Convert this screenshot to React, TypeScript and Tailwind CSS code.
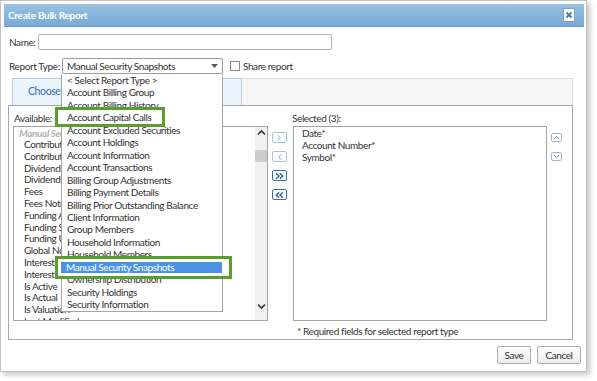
import React from "react";

const font = { fontFamily: "Lato, 'Open Sans', sans-serif" };

const availableItems = [
  "Contribution Amount",
  "Contribution Date",
  "Dividends Amount",
  "Dividends Date",
  "Fees",
  "Fees Notes",
  "Funding Amount",
  "Funding Source",
  "Funding Unit",
  "Global Notes",
  "Interest Amount",
  "Interest Date",
  "Is Active",
  "Is Actual",
  "Is Valuation",
  "Last Modified",
];

const reportTypes = [
  "< Select Report Type >",
  "Account Billing Group",
  "Account Billing History",
  "Account Capital Calls",
  "Account Excluded Securities",
  "Account Holdings",
  "Account Information",
  "Account Transactions",
  "Billing Group Adjustments",
  "Billing Payment Details",
  "Billing Prior Outstanding Balance",
  "Client Information",
  "Group Members",
  "Household Information",
  "Household Members",
  "Manual Security Snapshots",
  "Ownership Distribution",
  "Security Holdings",
  "Security Information",
];

const selectedItems = ["Date*", "Account Number*", "Symbol*"];

// little arrow buttons between the two lists
const MoveBtn = ({ dir, double }: { dir: "r" | "l"; double?: boolean }) => {
  const one = dir === "r" ? "M5 2 L8 5 L5 8" : "M9 2 L6 5 L9 8";
  const two =
    dir === "r"
      ? "M3.5 2 L6.5 5 L3.5 8 M7.5 2 L10.5 5 L7.5 8"
      : "M6.5 2 L3.5 5 L6.5 8 M10.5 2 L7.5 5 L10.5 8";
  return (
    <div
      className={`w-[15px] h-[11px] rounded-[2px] bg-white flex items-center justify-center ${
        double ? "border border-[#3d6fae]" : "border border-[#a9c1dc]"
      }`}
    >
      <svg width="14" height="10" viewBox="0 0 14 10">
        <path
          d={double ? two : one}
          stroke={double ? "#2c5c9a" : "#7b9bc2"}
          strokeWidth={double ? 1.4 : 1}
          fill="none"
        />
      </svg>
    </div>
  );
};

const App = () => {
  return (
    <div
      className="w-[597px] h-[381px] bg-white relative text-[#333] text-[10px] tracking-[-0.4px]"
      style={font}
    >
      <div className="w-[587px] h-[372px] border border-[#c2c2c2] shadow-[3px_3px_5px_rgba(0,0,0,0.22)] p-[3px] pr-[2px] flex flex-col">
        {/* title bar */}
        <div className="h-[23px] bg-gradient-to-b from-[#9ac2e4] to-[#78aad6] border-b border-[#6b9ccb] flex items-center justify-between pl-[4px] pr-[9px]">
          <span className="text-white font-bold text-[10px] tracking-[-0.3px]">Create Bulk Report</span>
          <div className="w-[12px] h-[14px] bg-white border border-[#8c9fb5] flex items-center justify-center">
            <svg width="8" height="8" viewBox="0 0 8 8">
              <path d="M1.5 1.5 L6.5 6.5 M6.5 1.5 L1.5 6.5" stroke="#3a7cc0" strokeWidth="1.8" />
            </svg>
          </div>
        </div>

        {/* name */}
        <div className="flex items-center mt-[7px] pl-[5px] h-[16px] whitespace-nowrap">
          <span className="w-[29px] shrink-0">Name:</span>
          <div className="w-[294px] h-[16px] border border-[#b5b5b5] rounded-[2px]" />
        </div>

        {/* report type */}
        <div className="flex items-center mt-[8px] pl-[5px] h-[16px] whitespace-nowrap">
          <span className="w-[53px] shrink-0">Report Type:</span>
          <div className="w-[161px] h-[16px] border border-[#9a9a9a] rounded-[2px] flex items-center justify-between pl-[4px] pr-[4px]">
            <span>Manual Security Snapshots</span>
            <svg width="7" height="4" viewBox="0 0 7 4">
              <path d="M0 0 L7 0 L3.5 4 Z" fill="#555" />
            </svg>
          </div>
          <div className="ml-[7px] w-[10px] h-[10px] border border-[#8a8a8a] bg-white" />
          <span className="ml-[3px]">Share report</span>
        </div>

        {/* tab strip */}
        <div className="ml-[8px] mr-[11px] mt-[4px] h-[27px] bg-[#f6f6f6] border border-[#dcdcdc] border-b-0 flex">
          <div className="w-[230px] h-[27px] -mt-[1px] -ml-[1px] bg-[#eaf4fd] border border-[#b9cbdc] border-b-0 flex items-center pl-[15px]">
            <span className="text-[#2a72b8] text-[10.5px]">Choose Columns</span>
          </div>
        </div>

        {/* panel */}
        <div className="ml-[4px] mr-[11px] h-[235px] border border-[#a9a9a9] flex flex-col">
          <div className="flex">
            {/* available */}
            <div className="ml-[4px] w-[255px] flex flex-col">
              <div className="h-[20px] pt-[5px] leading-[15px] pl-[1px]">Available:</div>
              <div className="h-[195px] border border-[#a3a3a3] flex overflow-hidden">
                <div className="flex-1 leading-[11.8px] overflow-hidden">
                  <div className="pl-[5px] h-[12px] leading-[12px] italic text-[#b4b4b4] font-bold whitespace-nowrap">
                    Manual Security Snapshots
                  </div>
                  {availableItems.map((it, i) => (
                    <div key={i} className="pl-[10px] whitespace-nowrap">
                      {it}
                    </div>
                  ))}
                </div>
                <div className="w-[12px] bg-[#f0f0f0] flex flex-col items-center">
                  <svg width="9" height="7" viewBox="0 0 9 7" className="mt-[2px]">
                    <path d="M1 5.5 L4.5 2 L8 5.5" stroke="#333" strokeWidth="1.6" fill="none" />
                  </svg>
                  <div className="mt-[14px] w-[12px] h-[12px] bg-[#cdcdcd]" />
                  <div className="flex-1" />
                  <svg width="9" height="7" viewBox="0 0 9 7" className="mb-[10px]">
                    <path d="M1 1.5 L4.5 5 L8 1.5" stroke="#333" strokeWidth="1.6" fill="none" />
                  </svg>
                </div>
              </div>
            </div>

            {/* move buttons */}
            <div className="ml-[4px] mt-[26px] flex flex-col gap-[8px]">
              <MoveBtn dir="r" />
              <MoveBtn dir="l" />
              <MoveBtn dir="r" double />
              <MoveBtn dir="l" double />
            </div>

            {/* selected */}
            <div className="ml-[6px] w-[254px] flex flex-col">
              <div className="h-[20px] pt-[5px] leading-[15px] -ml-[1px]">Selected (3):</div>
              <div className="h-[195px] border border-[#a3a3a3] leading-[12px] pl-[8px]">
                {selectedItems.map((it) => (
                  <div key={it}>{it}</div>
                ))}
              </div>
            </div>

            {/* order buttons */}
            <div className="ml-[4px] mt-[27px] flex flex-col gap-[10px]">
              <div className="w-[11px] h-[9px] border border-[#9db7d6] rounded-[2px] flex items-center justify-center">
                <svg width="7" height="5" viewBox="0 0 7 5">
                  <path d="M1 4 L3.5 1.5 L6 4" stroke="#6f92bd" strokeWidth="1" fill="none" />
                </svg>
              </div>
              <div className="w-[11px] h-[9px] border border-[#9db7d6] rounded-[2px] flex items-center justify-center">
                <svg width="7" height="5" viewBox="0 0 7 5">
                  <path d="M1 1 L3.5 3.5 L6 1" stroke="#6f92bd" strokeWidth="1" fill="none" />
                </svg>
              </div>
            </div>
          </div>
          <div className="ml-[288px] mt-[4px] leading-[12px]">* Required fields for selected report type</div>
        </div>

        {/* footer */}
        <div className="flex justify-end gap-[6px] mt-[6px] pr-[3px]">
          <div className="w-[34px] h-[18px] border border-[#b0b0b0] rounded-[2px] bg-gradient-to-b from-white to-[#ececec] flex items-center justify-center">
            Save
          </div>
          <div className="w-[44px] h-[18px] border border-[#b0b0b0] rounded-[2px] bg-gradient-to-b from-white to-[#ececec] flex items-center justify-center">
            Cancel
          </div>
        </div>
      </div>

      {/* open select list, drawn over the dialog */}
      <div className="absolute left-[61px] top-[74px] w-[162px] h-[238px] bg-white border border-[#a5a5a5] border-t-0 leading-[12.45px]">
        {reportTypes.map((t) => (
          <div key={t} className="pl-[5px] whitespace-nowrap">
            {t}
          </div>
        ))}
      </div>

      {/* green callouts */}
      <div className="absolute left-[55px] top-[107px] w-[110px] h-[20px] border-[3px] border-[#5a9f2b] bg-white flex items-center pl-[9px] whitespace-nowrap">
        Account Capital Calls
      </div>
      <div className="absolute left-[55px] top-[256px] w-[177px] h-[23px] border-[3px] border-[#5a9f2b] bg-white flex items-center pl-[3px]">
        <div className="w-[161px] h-[11px] bg-[#4a92e6] text-white leading-[11px] pl-[5px] whitespace-nowrap">
          Manual Security Snapshots
        </div>
      </div>
    </div>
  );
};

export default App;
